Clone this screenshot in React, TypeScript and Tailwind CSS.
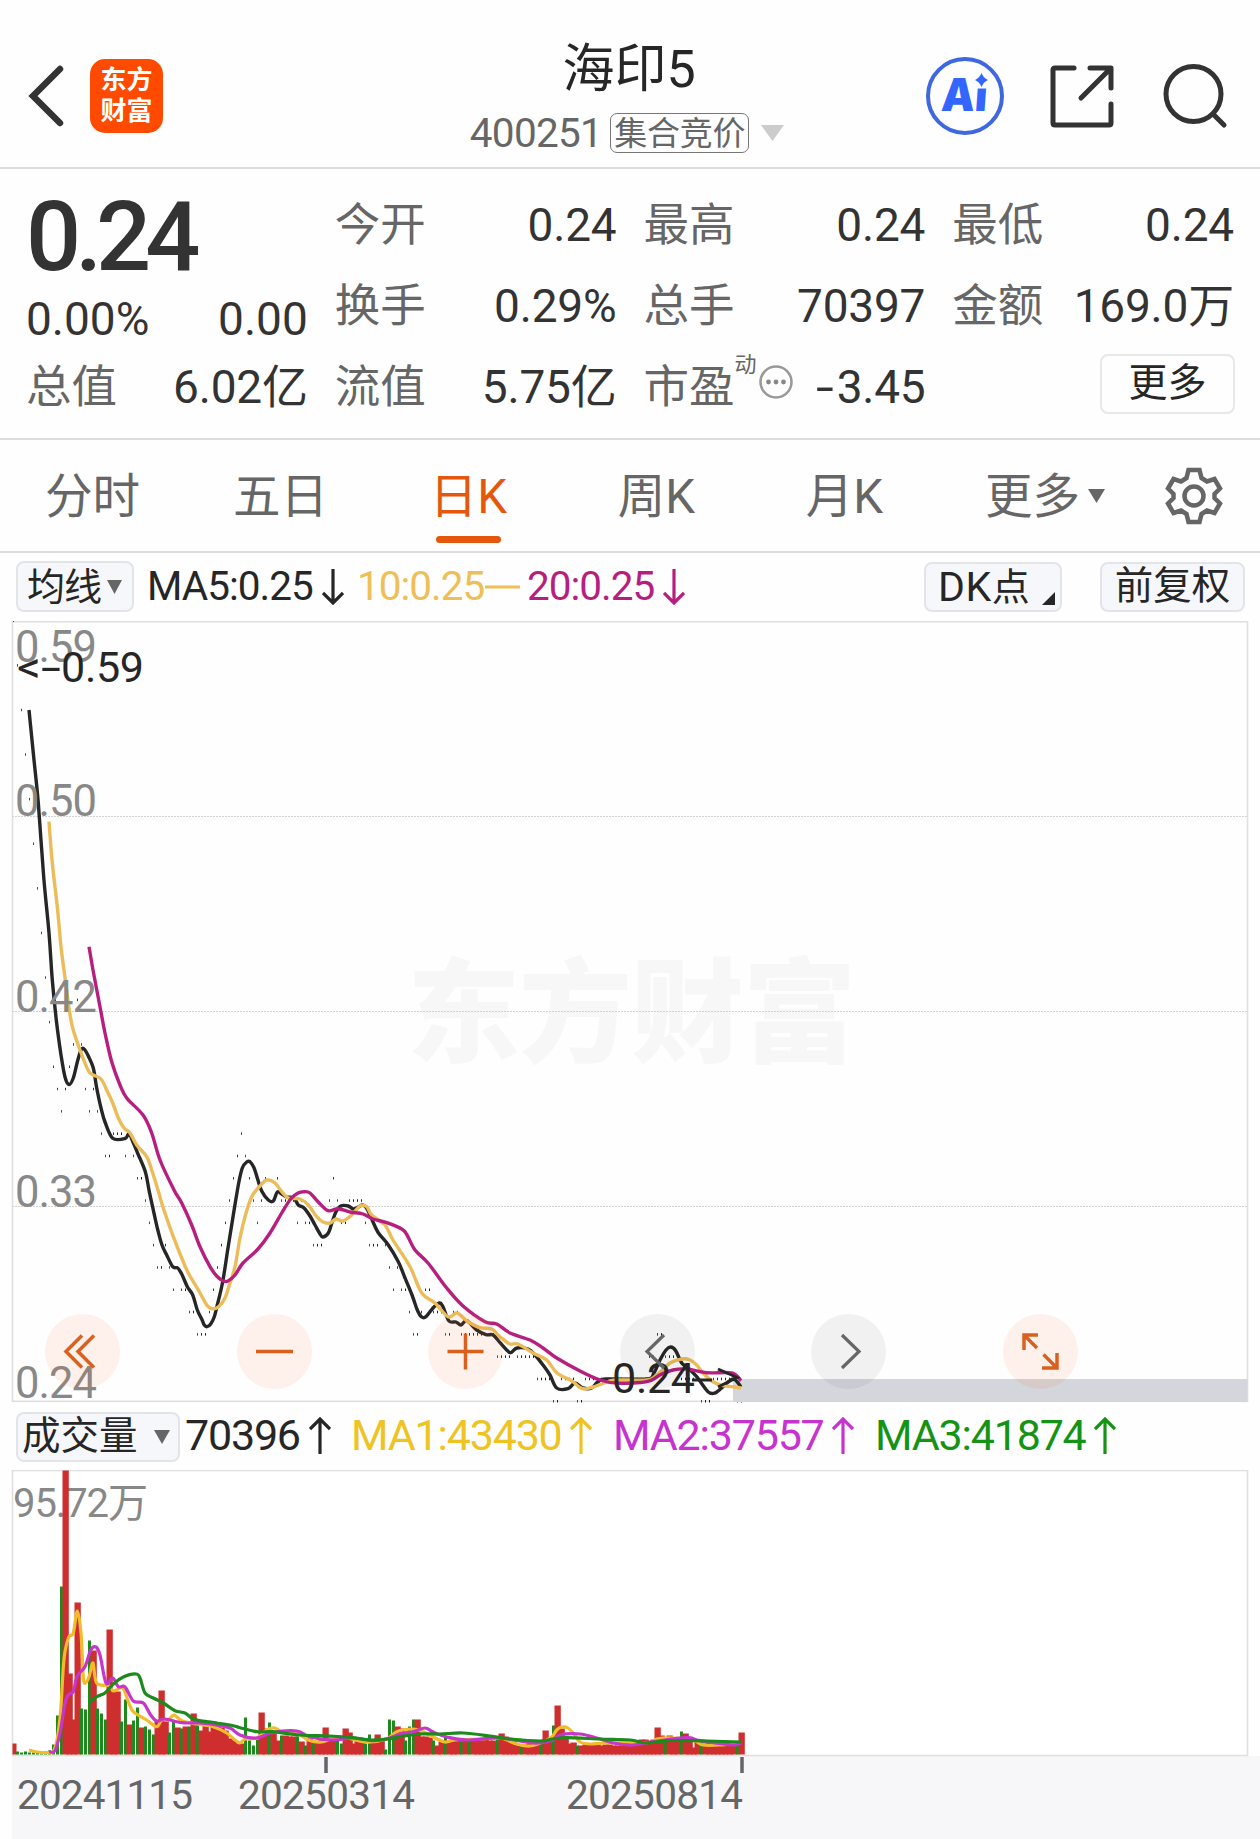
import { clsx } from 'clsx';

type Point = [number, number];

// Price in cents per trading day, oldest first
const CLOSES = [
  59, 57, 55, 53, 51, 49, 47, 45, 43, 41, 39, 38, 37, 38, 39, 40, 42, 40, 38, 37, 38, 37, 36, 35, 35, 36, 36, 36, 35, 36,
  35, 34, 34, 33, 32, 31, 30, 30, 31, 30, 29, 30, 29, 29, 28, 28, 27, 27, 27, 28, 29, 30, 31, 32, 33, 34, 35, 36, 35, 34,
  33, 32, 33, 34, 33, 33, 34, 33, 33, 33, 33, 32, 33, 32, 32, 31, 31, 31, 32, 33, 34, 33, 32, 32, 33, 33, 33, 33, 32, 31,
  31, 31, 32, 31, 30, 29, 30, 29, 29, 28, 27, 27, 28, 29, 29, 28, 28, 28, 27, 27, 28, 28, 27, 27, 27, 27, 27, 27, 27, 27,
  27, 26, 26, 26, 26, 27, 26, 26, 26, 26, 26, 25, 25, 25, 25, 24, 24, 25, 25, 25, 25, 24, 24, 25, 25, 25, 25, 25, 25, 25,
  25, 25, 25, 25, 25, 25, 25, 25, 25, 26, 26, 27, 27, 26, 26, 26, 25, 25, 25, 25, 25, 25, 24, 24, 24, 25, 25, 25, 25, 25,
  25, 24, 24,
];

const MA5: Point[] = [
  [29, 710], [33.5, 755], [38.3, 803], [43.7, 877], [49, 933], [52.3, 980], [56.3, 1020], [60.7, 1053], [65, 1077], [69, 1084.5],
  [73.3, 1078], [77.3, 1062], [81, 1050], [84, 1049], [88.3, 1056], [93.3, 1068], [96.7, 1088], [101, 1108], [105, 1122],
  [112.7, 1138.3], [125, 1138.5], [129, 1134], [133, 1142], [138, 1154], [145.3, 1171.7], [149.3, 1191.7], [153.3, 1210],
  [157.3, 1228], [162, 1245], [166.7, 1255], [172.7, 1266.7], [177.7, 1268], [181.7, 1274], [187.3, 1286.7], [192.7, 1295],
  [197.3, 1310], [201.7, 1319], [204.3, 1325], [207, 1326.7], [210.7, 1324], [214.3, 1316.7], [217.3, 1305], [222.7, 1281.7],
  [228, 1248], [233.3, 1215], [238.7, 1183], [242.3, 1168], [246.7, 1162], [250, 1161.7], [254, 1167.7], [257.3, 1178],
  [261.7, 1191], [268.3, 1200], [273.3, 1201], [277.3, 1192], [281.7, 1194], [286.7, 1197], [294, 1198], [298.3, 1205],
  [304, 1208], [310, 1216], [315, 1225], [319.3, 1232.7], [322.7, 1237], [328.3, 1233], [332.3, 1221.7], [336, 1211.7],
  [340.7, 1206], [348.3, 1206], [353.3, 1209], [358.3, 1207], [363, 1205], [367.7, 1210], [371.7, 1219], [378.3, 1232.7],
  [388.3, 1245], [398.3, 1261.7], [405, 1278], [412, 1295], [417.3, 1310], [421.7, 1317], [426, 1316.7], [433, 1308],
  [439.3, 1303], [443, 1306.7], [449, 1321], [456, 1322], [461, 1325], [466.7, 1320.7], [476.7, 1330], [486, 1334.7],
  [493, 1335], [500, 1342.7], [506.7, 1350], [510.7, 1352.7], [517, 1348], [528, 1349], [535, 1355], [543, 1365], [550, 1375],
  [556.7, 1388], [568, 1388.7], [575, 1383], [583, 1388], [591.7, 1388], [598, 1381.7], [606.7, 1379], [646.7, 1379],
  [654, 1372.7], [660, 1360], [666, 1350], [670.7, 1347], [675.7, 1350.7], [681.7, 1363], [688, 1368], [696.7, 1376.7],
  [708, 1391.7], [715, 1393], [721.7, 1388], [733, 1379], [741, 1387],
];

const MA10: Point[] = [
  [49, 821.7], [52.3, 863], [57.3, 906.7], [61, 946.7], [65.7, 983], [69.3, 1010], [72.7, 1028], [80, 1050], [88.3, 1070.7],
  [93.3, 1075], [101, 1079], [106.7, 1090], [112.7, 1103], [118.3, 1118], [124, 1128], [130, 1133], [136.7, 1145],
  [146.7, 1156.7], [151.7, 1170], [158, 1190], [161.7, 1203], [166, 1216], [173.3, 1236.7], [181.7, 1258], [188.3, 1273],
  [200, 1293], [206.7, 1305], [211.7, 1308.7], [218.3, 1307], [225, 1298], [230, 1283], [235, 1266.7], [240, 1238],
  [245, 1216.7], [251.7, 1196.7], [260, 1186], [266.7, 1180], [275, 1183], [281.7, 1191.7], [288.3, 1198], [300, 1199],
  [308.3, 1205], [316.7, 1216.7], [323, 1222], [330, 1223], [336, 1219], [343, 1221], [351.7, 1215], [360, 1206],
  [366.7, 1206.7], [371.7, 1215], [385, 1225], [393, 1240], [410, 1266.7], [421.7, 1293], [435, 1303], [448, 1316.7],
  [457, 1313], [467, 1321], [480, 1327.7], [491.7, 1329], [500, 1336.7], [510, 1344], [518, 1344], [533, 1353], [546.7, 1360],
  [557, 1373], [571.7, 1380.7], [579, 1387], [585, 1389], [593, 1387], [601.7, 1384], [615, 1380], [646.7, 1380],
  [656.7, 1375], [670, 1363], [681.7, 1359], [690, 1360], [696.7, 1365], [703, 1373], [713, 1381.7], [723, 1385.7],
  [735, 1387], [741, 1388],
];

const MA20: Point[] = [
  [89, 946.7], [93, 970], [100, 1006.7], [105, 1033], [111.7, 1061.7], [120, 1085], [126.7, 1098], [143, 1115], [151.7, 1133],
  [160, 1160], [174, 1190], [181.7, 1203], [191.7, 1225], [200, 1246.7], [210, 1266.7], [216.7, 1276], [222.7, 1280.7],
  [228, 1281], [235, 1275], [243, 1263], [258, 1249], [270, 1233], [281.7, 1213], [290.7, 1199], [298, 1193], [304, 1191.7],
  [310, 1193], [318, 1201.7], [328, 1210.7], [338, 1208.7], [350, 1212], [363, 1214], [373, 1219], [386.7, 1222.7],
  [401.7, 1229], [407, 1235], [415, 1250], [428, 1263], [446.7, 1288], [463, 1306], [485, 1321.7], [496.7, 1324],
  [510, 1333], [530, 1340], [543, 1348], [556.7, 1358], [580, 1371], [600, 1380], [616.7, 1383], [646.7, 1381.7],
  [660, 1375], [673, 1370], [686.7, 1369], [706.7, 1372.7], [731.7, 1373], [741, 1380.7],
];

// Bar heights in px, negative = falling day
const VOLUMES = [
  11, -3, -2, -3, -2, -2, -2, -2, -3, -4, -10, -39, -168, 284, 81, 35, 152, -46, -45, -114, 104, -46, -41, -35, 125, 64, 63,
  -33, -55, 30, -34, -47, 27, -28, -25, -20, 33, 64, 34, -22, -34, 27, -26, 28, -28, 41, -33, 24, 29, 23, 33, 28, 27, 24, 16,
  14, 11, 11, -37, -14, -9, -15, 42, 26, -32, 21, 14, -19, 19, 18, 18, -18, 13, -9, 16, -13, 13, 16, 27, 17, 17, -18, -11, 26,
  22, 11, 14, 13, -11, -20, 14, 20, 14, -5, -35, -34, 28, 26, -14, -28, -35, 35, 18, 18, 17, -14, 9, 13, -18, 14, 15, 15, -14,
  14, -14, 15, 16, 16, 15, 14, 14, -15, 21, 18, 15, 13, 9, -8, 10, 11, 10, 10, -12, 24, 14, -29, 49, 26, 18, 11, 12, -9, 9,
  10, 10, 10, 10, 9, 10, 10, 9, 9, 9, 9, 10, 10, 11, 15, 15, 13, 15, 27, 19, -16, 19, 14, 16, -23, 21, 16, 7, 13, -14, 11,
  12, 10, 10, 11, 10, 10, 11, -12, 22,
];

const VOL_MA1: Point[] = [
  [29, 1750], [37, 1752], [48, 1752.7], [53, 1751.7], [57, 1740], [60.7, 1710], [63.3, 1667], [65.3, 1650], [69, 1636.7],
  [73.3, 1633], [77.3, 1611], [81, 1633], [83.3, 1677], [85.7, 1683], [89.3, 1676], [93, 1663], [96.7, 1683], [109, 1685.7],
  [113.3, 1691], [120.7, 1688], [124, 1690], [128.3, 1701.7], [133.3, 1711.7], [146.7, 1720], [156.7, 1726.7], [161.7, 1720],
  [168.3, 1720], [174, 1715], [181.7, 1720.7], [196.7, 1724], [213, 1726.7], [226.7, 1733], [239, 1742.7], [245, 1739],
  [256.7, 1738], [266.7, 1730], [275, 1728], [283, 1732.7], [296.7, 1733], [308, 1740], [321.7, 1742], [333, 1738],
  [346.7, 1738], [366.7, 1742], [386.7, 1739], [396.7, 1731.7], [413, 1729], [423, 1731.7], [433, 1737], [445, 1742],
  [455, 1740], [480, 1739], [500, 1738], [516.7, 1744], [530, 1746], [543, 1741.7], [551.7, 1737], [556.7, 1730],
  [561.7, 1727], [568, 1728], [574, 1734], [580, 1742], [590, 1744], [606.7, 1743], [646.7, 1742.7], [656.7, 1739],
  [673, 1738], [693, 1740], [703, 1745], [720, 1745], [741, 1742.7],
];

const VOL_MA2: Point[] = [
  [49, 1751.7], [55, 1750.7], [60, 1733], [65.3, 1701.7], [69.3, 1694], [73.3, 1691.7], [77.3, 1676], [85, 1666.7],
  [90.7, 1650], [96, 1647], [100, 1655], [106, 1683], [112.7, 1678], [118.3, 1686.7], [125, 1687], [133.3, 1701],
  [143.3, 1703], [150, 1714], [156.7, 1721], [165, 1719], [181.7, 1722.7], [200, 1723], [216.7, 1725], [230, 1728],
  [240, 1735], [256.7, 1738], [271.7, 1732.7], [296.7, 1731], [310, 1737], [333, 1740], [353, 1738], [373, 1740.7],
  [386.7, 1739], [400, 1734], [413, 1731.7], [425, 1728], [433, 1732], [446.7, 1737], [466.7, 1740], [500, 1738],
  [533, 1743], [551.7, 1740.7], [560, 1735], [580, 1734], [596.7, 1738], [613, 1743], [633, 1745], [653, 1741.7],
  [686.7, 1737.7], [700, 1740.7], [733, 1745], [741, 1742.7],
];

const VOL_MA3: Point[] = [
  [89.3, 1703], [96.7, 1696.7], [105, 1693], [113.3, 1684], [123.3, 1677], [136, 1674], [140, 1678], [145, 1693],
  [153.3, 1698], [163.3, 1703], [175, 1710.7], [185, 1713], [193.3, 1719], [206.7, 1721.7], [230, 1725], [240, 1727.7],
  [256.7, 1731.7], [273, 1731.7], [300, 1735], [330, 1736], [353, 1737.7], [370, 1740], [386.7, 1739], [400, 1736.7],
  [420, 1734], [440, 1734], [463, 1733], [490, 1736], [510, 1739], [540, 1741], [553, 1739], [566.7, 1737.7], [600, 1739],
  [630, 1740], [646.7, 1743], [666.7, 1740.7], [693, 1740.7], [741, 1742],
];

const GRID = [816.5, 1011.5, 1206.5];

const PRICE_LABELS = [
  { text: '0.59', y: 662 },
  { text: '0.50', y: 816 },
  { text: '0.42', y: 1012 },
  { text: '0.33', y: 1207 },
  { text: '0.24', y: 1398 },
];

const TABS = ['分时', '五日', '日K', '周K', '月K'];

const barX = (i: number) => 13.5 + i * 4;

// Catmull-Rom through the points, written as cubic segments
function smooth(points: Point[]) {
  let d = `M${points[0][0]} ${points[0][1]}`;
  for (let i = 0; i < points.length - 1; i++) {
    const p0 = points[i - 1] ?? points[i];
    const p1 = points[i];
    const p2 = points[i + 1];
    const p3 = points[i + 2] ?? p2;
    const c1 = [p1[0] + (p2[0] - p0[0]) / 6, p1[1] + (p2[1] - p0[1]) / 6];
    const c2 = [p2[0] - (p3[0] - p1[0]) / 6, p2[1] - (p3[1] - p1[1]) / 6];
    d += `C${c1[0].toFixed(1)} ${c1[1].toFixed(1)} ${c2[0].toFixed(1)} ${c2[1].toFixed(1)} ${p2[0]} ${p2[1]}`;
  }
  return d;
}

function Arrow({ up = false, className }: { up?: boolean; className?: string }) {
  return (
    <svg width="22" height="37" viewBox="0 0 22 37" fill="none" stroke="currentColor" strokeWidth="3.2" className={clsx('shrink-0', className)}>
      {up ? <path d="M11 37V2M1 12L11 2L21 12" /> : <path d="M11 1V34M1 25L11 35L21 25" />}
    </svg>
  );
}

function Caret({ w, h, className }: { w: number; h: number; className?: string }) {
  return (
    <svg width={w} height={h} viewBox="0 0 10 10" preserveAspectRatio="none" fill="currentColor" className={clsx('shrink-0', className)}>
      <path d="M0 0H10L5 10Z" />
    </svg>
  );
}

function Stat({ label, value }: { label: string; value: string }) {
  return (
    <div className="flex h-[81px] items-center justify-between">
      <span className="pt-[3px] text-[45.5px] text-[#666]">{label}</span>
      <span className="text-[46px] tracking-[-0.2px]">{value}</span>
    </div>
  );
}

function Header() {
  return (
    <header className="flex h-[169px] border-b-2 border-[#dcdcdc]">
      <div className="flex w-[420px] items-center pl-[28px] pt-6">
        <svg width="38" height="62" viewBox="0 0 38 62" fill="none" stroke="#333" strokeWidth="6.5" strokeLinecap="round">
          <path d="M32 4L5 31L32 58" />
        </svg>
        <div className="ml-[24px] flex h-[74px] w-[73px] flex-col items-center justify-center rounded-[15px] bg-[#ff4a00] text-[26px] leading-[31px] font-bold text-white">
          <span>东方</span>
          <span>财富</span>
        </div>
      </div>
      <div className="flex w-[420px] flex-col items-center pt-[42px]">
        <h1 className="pr-[2px] text-[52px] leading-[56px] text-[#262626]">海印5</h1>
        <div className="flex items-center pt-[15px] pr-[6px] text-[#666]">
          <span className="text-[40.5px] leading-[40px] tracking-[-0.7px]">400251</span>
          <span className="ml-[8px] flex h-[40px] w-[139px] items-center justify-center rounded-[7px] border border-[#777] text-[33px] leading-none tracking-[-0.3px]">
            集合竞价
          </span>
          <Caret w={23} h={16} className="ml-[12px] text-[#ccc]" />
        </div>
      </div>
      <div className="flex w-[420px] items-center pl-[85px] pt-6">
        <svg width="80" height="82" viewBox="925 55 80 82">
          <g transform="translate(940.5 110.5) skewX(-4)">
            <text fontSize="45.5" fontWeight="900" fill="#3366ff" fontFamily="Inter, sans-serif" textLength="46" lengthAdjust="spacingAndGlyphs">
              Ai
            </text>
          </g>
          {/* sparkle takes the place of the dot */}
          <path d="M973 70H992V88.5H973Z" fill="#fefefe" />
          <path d="M981.5 73Q983.5 78 988 80Q983.5 82 981.5 87Q979.5 82 975 80Q979.5 78 981.5 73Z" fill="#3366ff" />
          <circle cx="965" cy="96" r="37" fill="none" stroke="#3f67e0" strokeWidth="4" />
        </svg>
        <svg width="66" height="66" viewBox="0 0 66 66" fill="none" stroke="#333" strokeWidth="5" strokeLinecap="round" strokeLinejoin="round" className="ml-[44px]">
          <path d="M25 5H6Q4 5 4 7V60Q4 62 6 62H60Q62 62 62 60V41M41 5H62V25M32 35L61 6" />
        </svg>
        <svg width="68" height="68" viewBox="0 0 68 68" fill="none" stroke="#333" strokeWidth="5" strokeLinecap="round" className="ml-[47px]">
          <circle cx="31.5" cy="32" r="27.5" />
          <path d="M51 52L62 63" />
        </svg>
      </div>
    </header>
  );
}

function Quote() {
  return (
    <section className="grid h-[271px] grid-cols-4 gap-x-[27px] border-b-2 border-[#dcdcdc] px-[26px] pt-[15px] text-[#333]">
      <div>
        <div className="h-[105px] pt-[1px] text-[97px] leading-[105px] font-medium tracking-[-6px]">0.24</div>
        <div className="flex h-[57px] items-center justify-between pt-[3px] text-[46px]">
          <span>0.00%</span>
          <span>0.00</span>
        </div>
        <Stat label="总值" value="6.02亿" />
      </div>
      <div>
        <Stat label="今开" value="0.24" />
        <Stat label="换手" value="0.29%" />
        <Stat label="流值" value="5.75亿" />
      </div>
      <div>
        <Stat label="最高" value="0.24" />
        <Stat label="总手" value="70397" />
        <div className="flex h-[81px] items-center">
          <span className="pt-[3px] text-[45.5px] text-[#666]">市盈</span>
          <span className="self-start pt-[8px] text-[22px] leading-[22px] text-[#666]">动</span>
          <svg width="34" height="34" viewBox="0 0 34 34" fill="#888" className="mb-[10px] ml-[2px]">
            <circle cx="17" cy="17" r="15.5" fill="none" stroke="#999" strokeWidth="2.5" />
            <circle cx="9.5" cy="17" r="2.4" />
            <circle cx="17" cy="17" r="2.4" />
            <circle cx="24.5" cy="17" r="2.4" />
          </svg>
          <span className="ml-auto text-[46px] tracking-[-0.3px]">
            <span className="mr-[3px] inline-block origin-right scale-x-140">-</span>3.45
          </span>
        </div>
      </div>
      <div>
        <Stat label="最低" value="0.24" />
        <Stat label="金额" value="169.0万" />
        <div className="flex h-[81px] items-center justify-end">
          <button className="-mr-px mb-[6px] h-[60px] w-[135px] rounded-lg border-2 border-[#e8e8e8] text-[39px] leading-none text-[#262626]">更多</button>
        </div>
      </div>
    </section>
  );
}

function Tabs() {
  return (
    <nav className="flex h-[113px] items-center border-b-2 border-[#dcdcdc] text-[47.5px] text-[#666]">
      {TABS.map((tab) => (
        <div key={tab} className={clsx('relative flex h-full w-[188px] items-center justify-center pt-[4px] pr-[3px]', tab === '日K' && 'text-[#e5570c]')}>
          {tab}
          {tab === '日K' && <span className="absolute bottom-[8px] left-[60px] h-[7px] w-[65px] rounded-full bg-[#e5570c]" />}
        </div>
      ))}
      <div className="flex w-[225px] items-center pt-[4px] pl-[45px]">
        更多
        <Caret w={17} h={14} className="mb-[4px] ml-[8px]" />
      </div>
      <svg width="58" height="58" viewBox="0 0 58 58" fill="none" stroke="#666" strokeWidth="4.5">
        <path d="M23.5 3H34.5L36.5 11L42 14.5L49.5 12L55 21.5L49.5 27V31L55 36.5L49.5 46L42 43.5L36.5 47L34.5 55H23.5L21.5 47L16 43.5L8.5 46L3 36.5L8.5 31V27L3 21.5L8.5 12L16 14.5L21.5 11Z" />
        <circle cx="29" cy="29" r="9.5" />
      </svg>
    </nav>
  );
}

function IndicatorRow() {
  return (
    <div className="flex h-[68px] items-center pr-[15px] pl-[16px] pb-[1px] text-[40.5px] tracking-[-1px]">
      <button className="flex h-[51px] w-[118px] items-center rounded-lg border-2 border-[#e2e4e8] bg-[#f6f7fa] pt-[1px] pl-[9px] text-[38px] leading-none text-[#262626]">
        均线
        <Caret w={15} h={14} className="ml-[6px] text-[#666]" />
      </button>
      <div className="flex w-[210px] items-center pl-[13px] text-[#262626]">
        MA5:0.25
        <Arrow className="ml-[9px]" />
      </div>
      <div className="flex w-[183px] items-center pl-[13px] text-[#efbf57]">
        10:0.25
        <svg width="35" height="4" className="ml-[1px]">
          <path d="M0 2H35" stroke="currentColor" strokeWidth="3" />
        </svg>
      </div>
      <div className="flex items-center text-[#b71f7f]">
        20:0.25
        <Arrow className="ml-[9px]" />
      </div>
      <button className="ml-auto flex h-[50px] w-[138px] items-end rounded-lg border-2 border-[#e2e4e8] bg-[#f6f7fa] pl-[12px] text-[38px] leading-[46px] tracking-normal text-[#262626]">
        <span className="text-[41px] tracking-[0.5px]">DK</span>点
        <svg width="13" height="13" viewBox="0 0 13 13" className="mr-[5px] mb-[5px] ml-auto">
          <path d="M13 0V13H0Z" fill="#262626" />
        </svg>
      </button>
      <button className="ml-[38px] h-[50px] w-[145px] rounded-lg border-2 border-[#e2e4e8] bg-[#f6f7fa] text-[38.5px] leading-none tracking-normal text-[#262626]">前复权</button>
    </div>
  );
}

function PriceChart() {
  return (
    <svg width="1260" height="782" viewBox="0 621 1260 782" className="block">
      <rect x="12.5" y="621.8" width="1235" height="779.5" fill="none" stroke="#e0e0e0" strokeWidth="1.6" />
      <text x="407" y="1053" fontSize="113" fontWeight="900" fill="#f7f7f7" textLength="449">
        东方财富
      </text>
      {GRID.map((y) => (
        <path key={y} d={`M12 ${y}H1247`} stroke="#d2d2d2" strokeWidth="1" strokeDasharray="2 1" />
      ))}
      {CLOSES.map((c, i) => (
        <rect
          key={i}
          x={barX(i) - 0.5}
          y={1400 - (c - 24) * 22.3}
          width="1"
          height="2.5"
          fill={i > 0 && c > CLOSES[i - 1] ? '#7a2020' : i > 0 && c === CLOSES[i - 1] ? '#222' : '#1c6b1c'}
        />
      ))}
      <rect x="733" y="1379" width="514.5" height="23" fill="#d3d6db" />
      <g fill="none" strokeWidth="3.4">
        <path d={smooth(MA5)} stroke="#262626" />
        <path d={smooth(MA10)} stroke="#ecbc58" />
        <path d={smooth(MA20)} stroke="#b71f7f" />
      </g>
      <g fontSize="43.5" fill="#888">
        {PRICE_LABELS.map((l) => (
          <text key={l.text} x="15" y={l.y} textLength="82">
            {l.text}
          </text>
        ))}
      </g>
      <g fontSize="43" fill="#262626">
        <text x="17" y="682" textLength="24" lengthAdjust="spacingAndGlyphs">
          &lt;
        </text>
        <text x="41" y="682" textLength="20" lengthAdjust="spacingAndGlyphs">
          -
        </text>
        <text x="61" y="682" textLength="83">
          0.59
        </text>
        <text x="612" y="1393" textLength="83">
          0.24
        </text>
        <path d="M692 1380H712M718 1369L737 1377.5L718 1387" fill="none" stroke="#262626" strokeWidth="3" />
      </g>
      <g fill="#ff641e" fillOpacity="0.09">
        <circle cx="82.5" cy="1351.5" r="37.5" />
        <circle cx="274.5" cy="1351.5" r="37.5" />
        <circle cx="465.5" cy="1351.5" r="37.5" />
        <circle cx="1040.5" cy="1351.5" r="37.5" />
      </g>
      <g fill="#000" fillOpacity="0.05">
        <circle cx="657.5" cy="1351.5" r="37.5" />
        <circle cx="848.5" cy="1351.5" r="37.5" />
      </g>
      <g fill="none" stroke="#d8611f" strokeWidth="3.5">
        <path d="M82 1335.5L66 1351.5L82 1367.5M94 1335.5L78 1351.5L94 1367.5" />
        <path d="M256 1351.5H293" />
        <path d="M447.5 1351.5H483.5M465.5 1333.5V1369.5" />
        <path d="M1038 1335H1024V1350M1024 1335L1037 1348M1043.5 1354.5L1057 1368M1057 1353V1368H1042" />
      </g>
      <g fill="none" stroke="#666" strokeWidth="3.2">
        <path d="M664 1335L647 1351.5L664 1368" />
        <path d="M842 1335L859 1351.5L842 1368" />
      </g>
    </svg>
  );
}

function VolumeRow() {
  return (
    <div className="flex h-[67px] items-center pl-[16px] text-[43px] tracking-[-1.2px]">
      <button className="flex h-[50px] w-[164px] items-center rounded-lg border-2 border-[#e2e4e8] bg-[#f6f7fa] pl-[4px] text-[38.5px] leading-none tracking-normal text-[#262626]">
        成交量
        <Caret w={16} h={14} className="ml-[16px] text-[#666]" />
      </button>
      <div className="flex w-[171px] items-center pb-[2px] pl-[5px] text-[#262626]">
        70396
        <Arrow up className="ml-[9px]" />
      </div>
      <div className="flex w-[262px] items-center pb-[2px] text-[#eec324]">
        MA1:43430
        <Arrow up className="ml-[8px]" />
      </div>
      <div className="flex w-[262px] items-center pb-[2px] text-[#c733cf]">
        MA2:37557
        <Arrow up className="ml-[8px]" />
      </div>
      <div className="flex items-center pb-[2px] text-[#159315]">
        MA3:41874
        <Arrow up className="ml-[8px]" />
      </div>
    </div>
  );
}

function VolumeChart() {
  return (
    <svg width="1260" height="369" viewBox="0 1470 1260 369" className="block">
      <rect x="12" y="1756" width="1248" height="83" fill="#f7f7fa" />
      <rect x="12.5" y="1470.5" width="1235" height="285" fill="#fff" stroke="#e0e0e0" strokeWidth="1.6" />
      <text x="13" y="1517" fontSize="40" fill="#888" textLength="135">
        95.72万
      </text>
      {VOLUMES.map((v, i) =>
        v > 0 ? (
          <rect key={i} x={Math.max(12.5, barX(i) - 3)} y={1754.5 - v} width={i === 0 ? 4 : 6.3} height={v} fill="#cf2e2e" />
        ) : (
          <rect key={i} x={barX(i) - 1.5} y={1754.5 + v} width="3" height={-v} fill="#1c8a1c" />
        )
      )}
      <g fill="none" strokeWidth="3.2">
        <path d={smooth(VOL_MA1)} stroke="#f2bb2c" />
        <path d={smooth(VOL_MA2)} stroke="#c635cc" />
        <path d={smooth(VOL_MA3)} stroke="#1c8a1c" />
      </g>
      <path d="M326 1757V1773M742 1757V1773" stroke="#666" strokeWidth="3.5" />
      <g fontSize="40.5" fill="#666">
        <text x="17" y="1809" textLength="176">20241115</text>
        <text x="238" y="1809" textLength="177">20250314</text>
        <text x="566" y="1809" textLength="177">20250814</text>
      </g>
    </svg>
  );
}

export default function App() {
  return (
    <div className="h-[1839px] w-[1260px] overflow-hidden bg-[#fefefe] font-['Roboto','Noto_Sans_CJK_SC',sans-serif] leading-none">
      <Header />
      <Quote />
      <Tabs />
      <IndicatorRow />
      <PriceChart />
      <VolumeRow />
      <VolumeChart />
    </div>
  );
}
